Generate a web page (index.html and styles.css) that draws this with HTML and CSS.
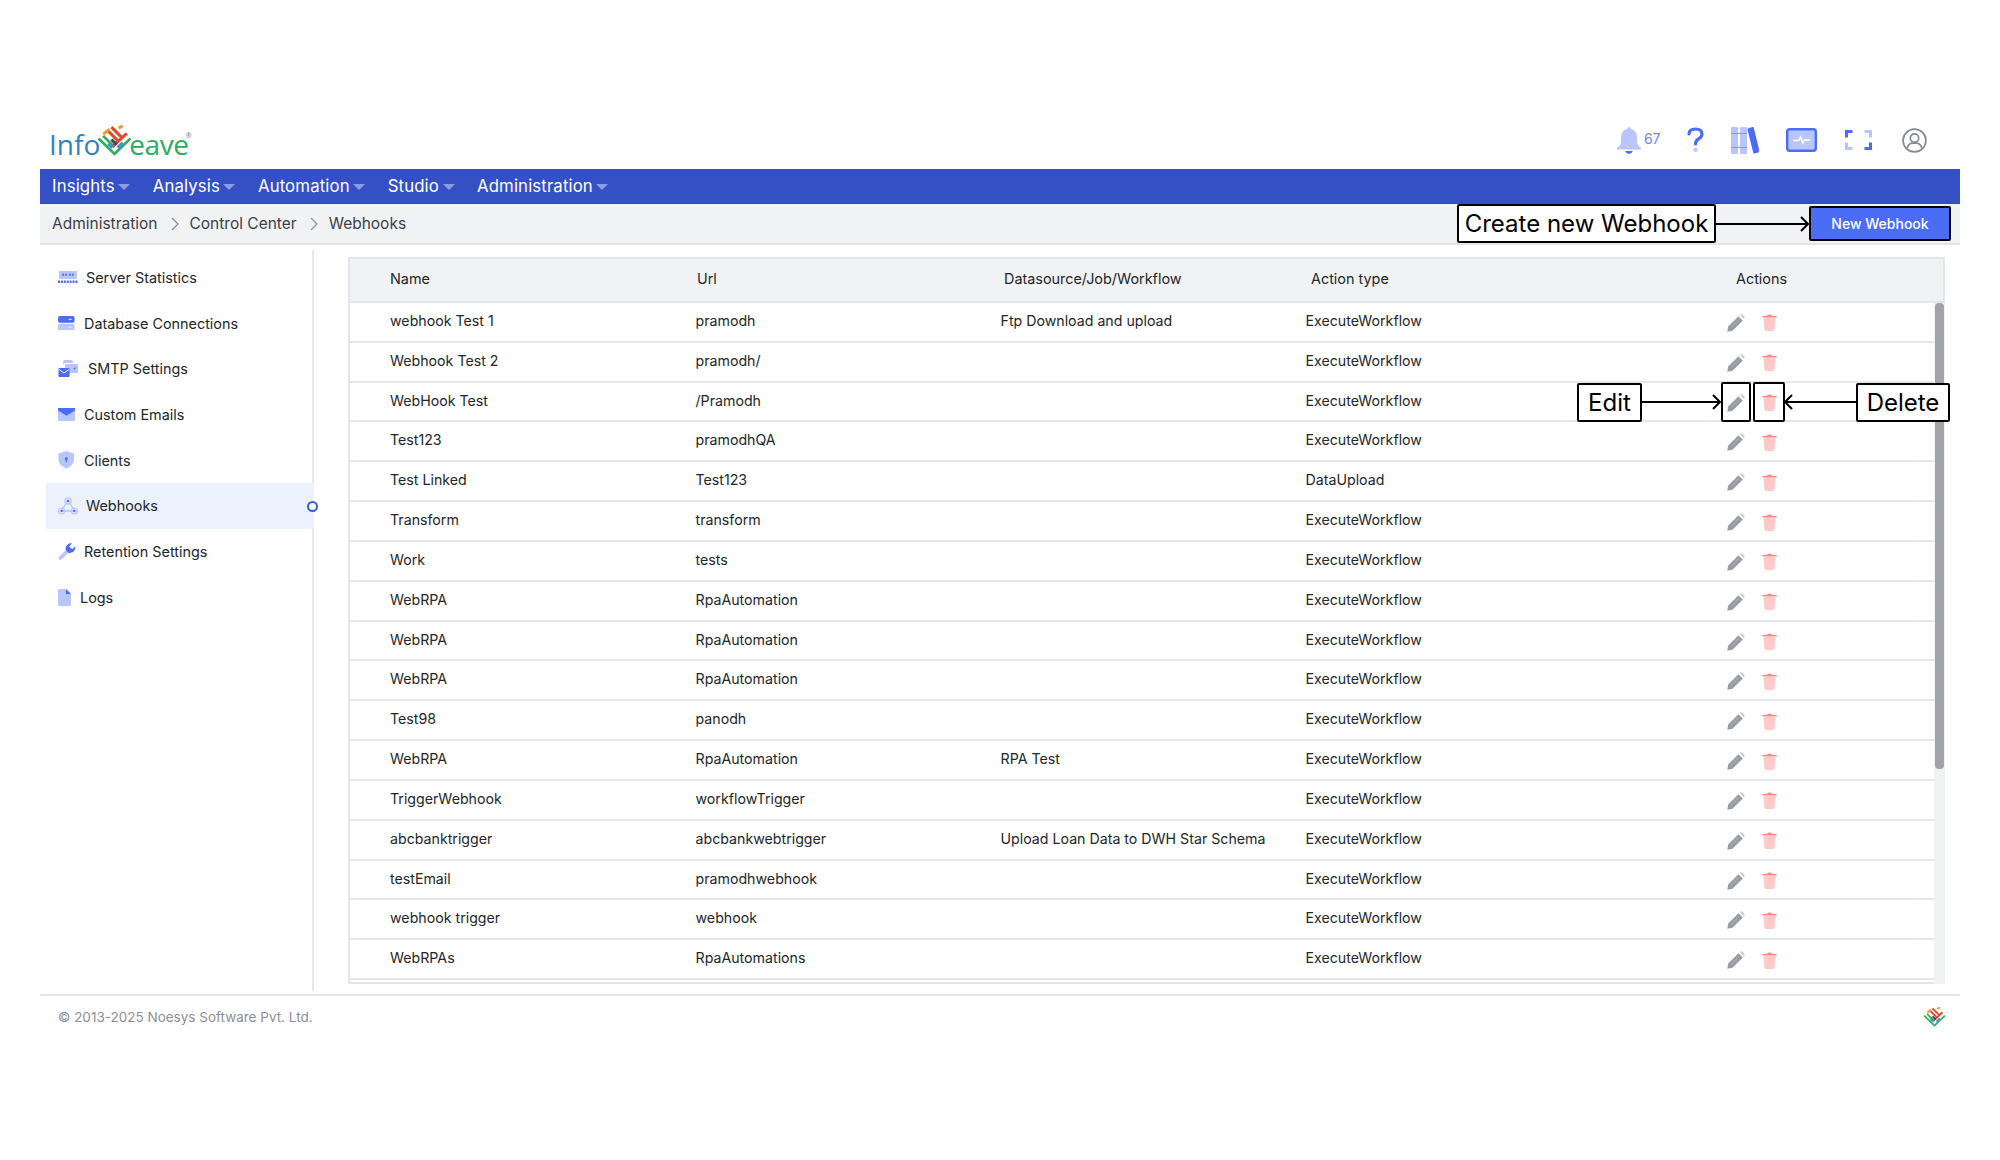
FILE: index.html
```html
<!DOCTYPE html>
<html lang="en">
<head>
<meta charset="utf-8">
<title>Webhooks</title>
<link rel="stylesheet" href="styles.css">
</head>
<body>
<svg class="defs" width="0" height="0" aria-hidden="true">
  <symbol id="mark" viewBox="0 0 34 30">
    <g fill="none" stroke-width="3">
      <path d="M1.5 13 L17 28 L32.5 13 M6 10.5 L17 21.5" stroke="#2fae5f" stroke-width="2.6"/>
      <path d="M14 2 L25 13 M10 5 L20 15 M29 8 L16 20" stroke="#df4b30"/>
      <path d="M6 9 L12 4 M21 3 L25 0.5" stroke="#f29a38"/>
      <path d="M11 18 L15 22 M20 22 L25 17" stroke="#4a90d4"/>
      <path d="M14 14 L19 19" stroke="#3f4a55"/>
    </g>
  </symbol>
  <symbol id="pencil" viewBox="0 0 18 18">
    <path d="M11.5 2.2 L15.8 6.5 L5.5 16.8 L0.3 17.7 L1.2 12.5 Z" fill="#979ca3"/>
    <path d="M12.7 1.1 Q14 0 15.3 0.5 L17.5 2.7 Q18 4 16.9 5.3 Z" fill="#cbced2"/>
    <path d="M4 13.5 L12.5 5" stroke="#bcbfc4" stroke-width="0.7"/>
  </symbol>
  <symbol id="trash" viewBox="0 0 16 18">
    <path d="M1.5 3.5 H14.5 L13.4 16.2 Q13.2 18 11.5 18 H4.5 Q2.8 18 2.6 16.2 Z" fill="#ffc9c9"/>
    <path d="M0 2.2 Q8 0.8 16 2.2 V3.4 H0 Z M5.5 1.5 Q8 -0.8 10.5 1.5 Z" fill="#ff8585"/>
  </symbol>
</svg>

<div class="app">
  <header class="topbar">
    <div class="logo">
      <span class="logo-info">Info</span>
      <svg class="logo-mark"><use href="#mark"/></svg>
      <span class="logo-eave">eave</span>
      <span class="logo-reg">®</span>
    </div>
    <div class="top-icons">
      <svg class="ic-bell" viewBox="0 0 24 27"><path d="M12 0 Q13.6 0 13.8 2 Q20 3.4 20 10.5 V15 Q20.4 18.6 24 21 V22.5 H0 V21 Q3.6 18.6 4 15 V10.5 Q4 3.4 10.2 2 Q10.4 0 12 0 Z" fill="#b9c6fb"/><path d="M8 24 H16 Q14.6 27 12 27 Q9.4 27 8 24 Z" fill="#4a6cf7"/></svg>
      <span class="bell-count">67</span>
      <svg class="ic-help" viewBox="0 0 17 25"><path d="M2 7 Q2 2 8.5 2 Q15 2 15 7 Q15 10 11.5 12 Q8.5 13.8 8.5 17" fill="none" stroke="#4a6cf7" stroke-width="3.2" stroke-linecap="round"/><circle cx="8.5" cy="22.8" r="2.2" fill="#b9c6fb"/></svg>
      <svg class="ic-books" viewBox="0 0 28 27"><path d="M0 1 Q0 0 1 0 H6 Q7 0 7 1 V26 Q7 27 6 27 H1 Q0 27 0 26 Z M9 1 Q9 0 10 0 H15 Q16 0 16 1 V26 Q16 27 15 27 H10 Q9 27 9 26 Z" fill="#b9c6fb"/><path d="M0 6.5 H16 M0 20.5 H16" stroke="#7f97f8" stroke-width="1.2"/><path d="M17 2 L22 0.5 L28 24.5 L23 26 Z" fill="#4a6cf7" stroke="#4a6cf7" stroke-linejoin="round" stroke-width="1.2"/></svg>
      <svg class="ic-monitor" viewBox="0 0 31 24"><rect x="1.2" y="1.2" width="28.6" height="21.6" rx="2.5" fill="#b9c6fb" stroke="#4a6cf7" stroke-width="2.4"/><path d="M7 12.5 H12.5 L14.5 9 L16.8 15 L18.5 12 H24" fill="none" stroke="#fff" stroke-width="1.5"/></svg>
      <svg class="ic-full" viewBox="0 0 27 20" fill="none" stroke-width="3"><path d="M7.5 1.5 H1.5 V7.5" stroke="#4a6cf7"/><path d="M19.5 1.5 H25.5 V7.5" stroke="#b9c6fb"/><path d="M1.5 12.5 V18.5 H7.5" stroke="#b9c6fb"/><path d="M25.5 12.5 V18.5 H19.5" stroke="#4a6cf7"/></svg>
      <svg class="ic-user" viewBox="0 0 25 25" fill="none" stroke="#858a90" stroke-width="1.7"><circle cx="12.5" cy="12.5" r="11.4"/><circle cx="12.5" cy="10" r="4.2"/><path d="M5 20.4 Q6.4 15.6 10 15.2 H15 Q18.6 15.6 20 20.4"/></svg>
    </div>
  </header>

  <nav class="navbar">
    <a class="nav-item nav-insights">Insights<i class="caret"></i></a>
    <a class="nav-item">Analysis<i class="caret"></i></a>
    <a class="nav-item">Automation<i class="caret"></i></a>
    <a class="nav-item">Studio<i class="caret"></i></a>
    <a class="nav-item">Administration<i class="caret"></i></a>
  </nav>

  <div class="crumbs">
    <span>Administration</span>
    <svg class="chev" viewBox="0 0 8 14"><path d="M1 1 L7 7 L1 13" fill="none" stroke="#8a8e94" stroke-width="1.2"/></svg>
    <span>Control Center</span>
    <svg class="chev" viewBox="0 0 8 14"><path d="M1 1 L7 7 L1 13" fill="none" stroke="#8a8e94" stroke-width="1.2"/></svg>
    <span>Webhooks</span>
    <button class="new-btn">New Webhook</button>
  </div>

  <div class="content">
    <aside class="sidebar">
      <a class="side-item t86"><svg class="s-ic" viewBox="0 0 20 12"><path d="M1 0 H19 V8 H1 Z" fill="#b9c6fb"/><path d="M5 2.5 V5 M8 2.5 V5 M12 2.5 V5 M15 2.5 V5" stroke="#4a6cf7" stroke-width="1.5"/><path d="M0 10.8 H20" stroke="#4a6cf7" stroke-width="2.4" stroke-dasharray="2 .9"/></svg>Server Statistics</a>
      <a class="side-item t84"><svg class="s-ic" viewBox="0 0 18 15"><rect y="0" width="17" height="7" rx="2" fill="#4a6cf7"/><rect y="8" width="17" height="7" rx="2" fill="#b9c6fb"/><path d="M11 3.5 H14 M11 11.5 H14" stroke="#fff" stroke-width="1"/></svg>Database Connections</a>
      <a class="side-item t88"><svg class="s-ic" viewBox="0 0 20 17"><path d="M5 6 V2 Q5 0 7 0 H13 Q15 0 15 2 V3 H7 Q5 3 5 6 Z" fill="#b9c6fb"/><rect x="7" y="4" width="13" height="9" rx="1" fill="#b9c6fb"/><circle cx="16.5" cy="8.5" r="1" fill="#4a6cf7"/><rect x="0.5" y="8" width="11" height="9" rx="1" fill="#4a6cf7"/><path d="M1 9.5 L6 13 L11 9.5" fill="none" stroke="#fff" stroke-width="1"/></svg>SMTP Settings</a>
      <a class="side-item t84"><svg class="s-ic" viewBox="0 0 18 14"><rect width="17.5" height="14" rx="1.5" fill="#b9c6fb"/><path d="M0 0 H17.5 V2.5 L8.75 8 L0 2.5 Z" fill="#4a6cf7"/></svg>Custom Emails</a>
      <a class="side-item t84"><svg class="s-ic" viewBox="0 0 18 18"><path d="M8.5 0 L16.5 2.5 V9 Q16.5 14.5 8.5 18 Q.5 14.5 .5 9 V2.5 Z" fill="#b9c6fb"/><circle cx="8.5" cy="8" r="1.5" fill="#4a6cf7"/><path d="M8.5 8 V11.5" stroke="#4a6cf7" stroke-width="1.2"/></svg>Clients</a>
      <a class="side-item t86 active"><svg class="s-ic" viewBox="0 0 20 18" fill="none"><path d="M10 3 L3.5 14 M10 3 L16.5 14 M3.5 14 H16.5" stroke="#b9c6fb" stroke-width="1.3"/><circle cx="10" cy="4" r="3.2" stroke="#b9c6fb" stroke-width="1.2"/><circle cx="3.6" cy="14" r="3" stroke="#b9c6fb" stroke-width="1.2"/><circle cx="16.4" cy="14" r="3" stroke="#b9c6fb" stroke-width="1.2"/><circle cx="10" cy="4" r="1.2" fill="#4a6cf7"/><circle cx="3.6" cy="14" r="1.2" fill="#4a6cf7"/><circle cx="16.4" cy="14" r="1.2" fill="#4a6cf7"/></svg>Webhooks<i class="side-dot"></i></a>
      <a class="side-item t84"><svg class="s-ic" viewBox="0 0 18 18"><path d="M1.5 13.5 L8 7.5 L10.5 10 L4.5 16.5 Q2.5 18 1 16.8 Q0 15 1.5 13.5 Z" fill="#b9c6fb"/><path d="M8 7.5 Q7 2.5 11.5 0.5 Q13 0 14.5 .3 L11.5 3.5 L14.5 6.5 L17.6 3.4 Q18 5 17.5 6.5 Q15.5 11 10.5 10 Z" fill="#4a6cf7"/></svg>Retention Settings</a>
      <a class="side-item t80"><svg class="s-ic" viewBox="0 0 13 17"><path d="M1.5 0 H8 L13 5 V15.5 Q13 17 11.5 17 H1.5 Q0 17 0 15.5 V1.5 Q0 0 1.5 0 Z" fill="#b9c6fb"/><path d="M8 0 L13 5 H8 Z" fill="#4a6cf7"/></svg>Logs</a>
    </aside>

    <section class="table">
      <div class="thead">
        <span>Name</span><span>Url</span><span>Datasource/Job/Workflow</span><span>Action type</span><span>Actions</span>
      </div>
      <div class="tbody">
        <div class="rows">
          <div class="row"><span>webhook Test 1</span><span>pramodh</span><span>Ftp Download and upload</span><span>ExecuteWorkflow</span><span class="acts"><svg class="a-edit"><use href="#pencil"/></svg><svg class="a-del"><use href="#trash"/></svg></span></div>
          <div class="row"><span>Webhook Test 2</span><span>pramodh/</span><span></span><span>ExecuteWorkflow</span><span class="acts"><svg class="a-edit"><use href="#pencil"/></svg><svg class="a-del"><use href="#trash"/></svg></span></div>
          <div class="row"><span>WebHook Test</span><span>/Pramodh</span><span></span><span>ExecuteWorkflow</span><span class="acts"><svg class="a-edit"><use href="#pencil"/></svg><svg class="a-del"><use href="#trash"/></svg></span></div>
          <div class="row"><span>Test123</span><span>pramodhQA</span><span></span><span>ExecuteWorkflow</span><span class="acts"><svg class="a-edit"><use href="#pencil"/></svg><svg class="a-del"><use href="#trash"/></svg></span></div>
          <div class="row"><span>Test Linked</span><span>Test123</span><span></span><span>DataUpload</span><span class="acts"><svg class="a-edit"><use href="#pencil"/></svg><svg class="a-del"><use href="#trash"/></svg></span></div>
          <div class="row"><span>Transform</span><span>transform</span><span></span><span>ExecuteWorkflow</span><span class="acts"><svg class="a-edit"><use href="#pencil"/></svg><svg class="a-del"><use href="#trash"/></svg></span></div>
          <div class="row"><span>Work</span><span>tests</span><span></span><span>ExecuteWorkflow</span><span class="acts"><svg class="a-edit"><use href="#pencil"/></svg><svg class="a-del"><use href="#trash"/></svg></span></div>
          <div class="row"><span>WebRPA</span><span>RpaAutomation</span><span></span><span>ExecuteWorkflow</span><span class="acts"><svg class="a-edit"><use href="#pencil"/></svg><svg class="a-del"><use href="#trash"/></svg></span></div>
          <div class="row"><span>WebRPA</span><span>RpaAutomation</span><span></span><span>ExecuteWorkflow</span><span class="acts"><svg class="a-edit"><use href="#pencil"/></svg><svg class="a-del"><use href="#trash"/></svg></span></div>
          <div class="row"><span>WebRPA</span><span>RpaAutomation</span><span></span><span>ExecuteWorkflow</span><span class="acts"><svg class="a-edit"><use href="#pencil"/></svg><svg class="a-del"><use href="#trash"/></svg></span></div>
          <div class="row"><span>Test98</span><span>panodh</span><span></span><span>ExecuteWorkflow</span><span class="acts"><svg class="a-edit"><use href="#pencil"/></svg><svg class="a-del"><use href="#trash"/></svg></span></div>
          <div class="row"><span>WebRPA</span><span>RpaAutomation</span><span>RPA Test</span><span>ExecuteWorkflow</span><span class="acts"><svg class="a-edit"><use href="#pencil"/></svg><svg class="a-del"><use href="#trash"/></svg></span></div>
          <div class="row"><span>TriggerWebhook</span><span>workflowTrigger</span><span></span><span>ExecuteWorkflow</span><span class="acts"><svg class="a-edit"><use href="#pencil"/></svg><svg class="a-del"><use href="#trash"/></svg></span></div>
          <div class="row"><span>abcbanktrigger</span><span>abcbankwebtrigger</span><span>Upload Loan Data to DWH Star Schema</span><span>ExecuteWorkflow</span><span class="acts"><svg class="a-edit"><use href="#pencil"/></svg><svg class="a-del"><use href="#trash"/></svg></span></div>
          <div class="row"><span>testEmail</span><span>pramodhwebhook</span><span></span><span>ExecuteWorkflow</span><span class="acts"><svg class="a-edit"><use href="#pencil"/></svg><svg class="a-del"><use href="#trash"/></svg></span></div>
          <div class="row"><span>webhook trigger</span><span>webhook</span><span></span><span>ExecuteWorkflow</span><span class="acts"><svg class="a-edit"><use href="#pencil"/></svg><svg class="a-del"><use href="#trash"/></svg></span></div>
          <div class="row"><span>WebRPAs</span><span>RpaAutomations</span><span></span><span>ExecuteWorkflow</span><span class="acts"><svg class="a-edit"><use href="#pencil"/></svg><svg class="a-del"><use href="#trash"/></svg></span></div>
        </div>
        <div class="scrollbar"><div class="thumb"></div></div>
      </div>
    </section>
  </div>

  <footer class="footer">
    <span>© 2013-2025 Noesys Software Pvt. Ltd.</span>
    <svg class="foot-mark"><use href="#mark"/></svg>
  </footer>
</div>

<div class="note note-create">Create new Webhook</div>
<div class="note note-edit">Edit</div>
<div class="note note-delete">Delete</div>
<div class="frame frame-edit"></div>
<div class="frame frame-del"></div>
<svg class="arrows" viewBox="0 0 2000 1160" fill="none" stroke="#000" stroke-width="2">
  <path d="M1716 224 H1808 M1801 217 L1808 224 L1801 231"/>
  <path d="M1642 402 H1720 M1713 395 L1720 402 L1713 409"/>
  <path d="M1856 402 H1785 M1792 395 L1785 402 L1792 409"/>
</svg>
</body>
</html>
```
FILE: styles.css
```css
* { box-sizing: border-box; }
html, body { margin: 0; background: #fff; }
body { font-family: "Inter", "Liberation Sans", sans-serif; color: #23262b; width: 2000px; height: 1160px; overflow: hidden; position: relative; }
.defs { position: absolute; }
.app { padding: 120px 40px 0; }

.topbar { height: 49px; display: flex; justify-content: space-between; position: relative; }
.logo { display: flex; align-items: flex-end; padding: 0 0 9px 9px; font-family: "Open Sans", sans-serif; font-size: 28px; line-height: 32px; }
.logo-info { color: #2f82c2; }
.logo-eave { color: #27ae60; margin-left: -3px; letter-spacing: -0.4px; }
.logo-reg { color: #777; font-size: 7px; line-height: 7px; align-self: flex-start; margin: 12px 0 0 -3px; }
.logo-mark { width: 35px; height: 31px; margin: 0 0 4px -3px; align-self: flex-end; }

.top-icons { display: flex; align-items: flex-start; padding: 7px 33px 0 0; }
.top-icons svg { display: block; flex: none; }
.ic-bell { width: 24px; height: 27px; }
.bell-count { color: #6f86ee; font-size: 14px; line-height: 16px; margin: 4px 0 0 3px; width: 16px; letter-spacing: -0.2px; }
.ic-help { width: 17px; height: 25px; margin-left: 27px; }
.ic-books { width: 28px; height: 27px; margin-left: 27px; }
.ic-monitor { width: 31px; height: 24px; margin: 1px 0 0 27px; }
.ic-full { width: 27px; height: 20px; margin: 3px 0 0 28px; }
.ic-user { width: 25px; height: 25px; margin: 1px 0 0 30px; }

.navbar { height: 35px; background: #354fc5; border-bottom: 1px solid #2f49d0; display: flex; align-items: center; padding: 0 0 1px 12px; color: #fff; font-size: 16.8px; }
.nav-item { display: flex; align-items: center; margin-right: 22.5px; white-space: nowrap; letter-spacing: 0.12px; }
.caret { width: 0; height: 0; border: 6px solid transparent; border-top: 6px solid #8e9de2; border-bottom: 0; margin: 3px 0 0 3.5px; }

.crumbs { height: 41px; background: #f1f2f4; border-bottom: 2px solid #e2e5ea; display: flex; align-items: center; padding-left: 12px; font-size: 15.5px; color: #3c4047; position: relative; }
.chev { width: 8px; height: 14px; margin: 0 11px 0 13px; }
.new-btn { margin: 0 9px 0 auto; width: 142px; height: 35px; background: #4a6cf7; border: 2px solid #000; border-radius: 2px; color: #fff; font: 500 14px "Inter", sans-serif; padding: 0; }

.content { display: flex; height: 745px; padding-top: 5px; }
.sidebar { width: 274px; height: 741px; flex: none; border-right: 2px solid #e5e8ee; padding: 4.5px 0 0 6px; }
.side-item { height: 45.7px; display: flex; align-items: center; padding-left: 12px; font-size: 14.4px; color: #23262b; position: relative; white-space: nowrap; }
.s-ic { display: block; flex: none; height: auto; }
.t86 .s-ic { width: 20px; margin-right: 8px; }
.t84 .s-ic { width: 17.5px; margin-right: 8.5px; }
.t88 .s-ic { width: 20px; margin-right: 10px; }
.t80 .s-ic { width: 13px; margin-right: 9px; }
.active { background: #ebf1fd; margin-right: -2px; }
.side-dot { position: absolute; right: -4px; top: 18px; width: 11px; height: 11px; border-radius: 50%; border: 2px solid #3a5ae0; background: #fff; }

.table { width: 1597px; height: 727px; margin: 7px 0 0 34px; border: 2px solid #e2e5ea; background: #fff; flex: none; display: flex; flex-direction: column; }
.thead { height: 44px; flex: none; background: #f1f2f4; border-bottom: 2px solid #e2e5ea; display: grid; grid-template-columns: 307px 307px 307px 425px auto; align-items: center; padding: 0 0 3px 40px; font-size: 14.4px; }
.tbody { flex: 1; display: flex; min-height: 0; }
.rows { flex: 1; min-width: 0; overflow: hidden; }
.row { height: 39.83px; border-bottom: 2px solid #e4e7ec; display: grid; grid-template-columns: 305.5px 305px 305px 422px auto; align-items: center; padding-left: 40px; font-size: 14.2px; padding-bottom: 3px; }
.acts { display: flex; align-items: center; margin-top: 5px; }
.a-edit { width: 18px; height: 18px; margin-left: -1px; }
.a-del { width: 15px; height: 17px; margin-left: 17px; }
.scrollbar { width: 11px; flex: none; background: #f1f2f4; margin: 0 -2px -2px 0; padding: 0 1px; position: relative; }
.thumb { height: 466px; background: #a0a3a8; border-radius: 4px; }

.footer { height: 50px; margin-top: 4px; border-top: 2px solid #e2e5ea; display: flex; justify-content: space-between; padding: 13px 14px 0 18px; font-size: 13.5px; color: #8b8f96; }
.foot-mark { width: 23px; height: 20px; margin-top: -2px; }

.note { position: absolute; background: #fff; border: 2px solid #000; border-radius: 2px; color: #000; display: flex; align-items: center; justify-content: center; font-size: 24px; }
.note-create { left: 1457px; top: 204px; width: 259px; height: 39px; }
.note-edit { left: 1577px; top: 383px; width: 65px; height: 39px; }
.note-delete { left: 1856px; top: 383px; width: 94px; height: 39px; }
.frame { position: absolute; border: 2px solid #000; border-radius: 2px; top: 382px; height: 40px; }
.frame-edit { left: 1721px; width: 30px; }
.frame-del { left: 1753px; width: 32px; }
.arrows { position: absolute; left: 0; top: 0; width: 2000px; height: 1160px; pointer-events: none; }
```
